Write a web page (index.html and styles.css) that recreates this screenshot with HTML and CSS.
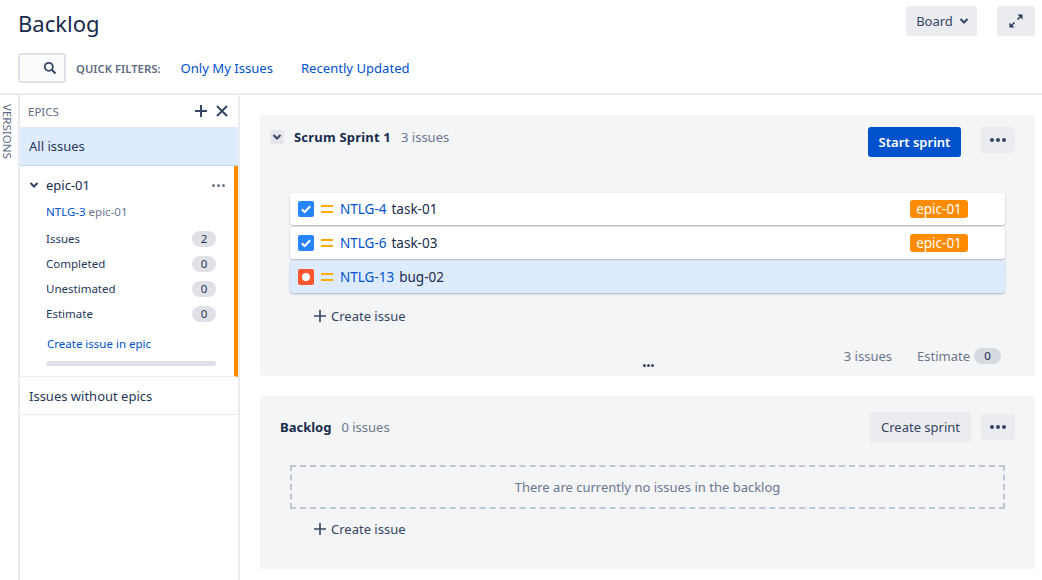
FILE: index.html
```html
<!DOCTYPE html>
<html lang="en">
<head>
	<meta charset="UTF-8">
	<meta name="viewport" content="width=device-width, initial-scale=1.0">
	<title>Backlog</title>
	<link rel="stylesheet" href="styles.css">
</head>
<body>
	<header class="header">
		<div class="title-row">
			<h1>Backlog</h1>
			<div class="title-actions">
				<button class="btn btn-board">Board
					<svg width="10" height="8" viewBox="0 0 10 8"><path d="M1.500 2l3.500 3.500L8.500 2" fill="none" stroke="#344563" stroke-width="2"/></svg>
				</button>
				<button class="btn btn-expand" aria-label="Expand">
					<svg width="16" height="16" viewBox="0 0 16 16"><path d="M9.500 1.500H14.500V6.500ZM1.500 14.500V9.500L6.500 14.500Z" fill="#253858"/><path d="M12 4L9.500 6.500M4 12l2.500-2.500" stroke="#253858" stroke-width="1.500"/></svg>
				</button>
			</div>
		</div>
		<div class="filter-row">
			<div class="search">
				<svg width="14" height="14" viewBox="0 0 14 14"><circle cx="5.800" cy="5.800" r="4" fill="none" stroke="#344563" stroke-width="1.800"/><path d="M8.800 8.800l3.700 3.700" stroke="#344563" stroke-width="2"/></svg>
			</div>
			<span class="filter-label">QUICK FILTERS:</span>
			<a class="filter-link">Only My Issues</a>
			<a class="filter-link">Recently Updated</a>
		</div>
	</header>

	<div class="content">
		<div class="versions"><span>VERSIONS</span></div>

		<aside class="epics">
			<div class="epics-head">
				<span>EPICS</span>
				<div class="epics-tools">
					<svg width="14" height="14" viewBox="0 0 14 14"><path d="M7 1v12M1 7h12" stroke="#344563" stroke-width="2"/></svg>
					<svg width="14" height="14" viewBox="0 0 14 14"><path d="M2 2l10 10M12 2L2 12" stroke="#344563" stroke-width="2"/></svg>
				</div>
			</div>
			<div class="all-issues">All issues</div>
			<div class="epic">
				<div class="epic-title">
					<svg width="10" height="8" viewBox="0 0 10 8"><path d="M1.500 2l3.500 3.500L8.500 2" fill="none" stroke="#344563" stroke-width="2"/></svg>
					<span>epic-01</span>
					<div class="epic-more"><i></i><i></i><i></i></div>
				</div>
				<div class="epic-key"><a>NTLG-3</a> epic-01</div>
				<div class="epic-stat"><span>Issues</span><b>2</b></div>
				<div class="epic-stat"><span>Completed</span><b>0</b></div>
				<div class="epic-stat"><span>Unestimated</span><b>0</b></div>
				<div class="epic-stat"><span>Estimate</span><b>0</b></div>
				<a class="epic-create">Create issue in epic</a>
				<div class="epic-progress"></div>
			</div>
			<div class="no-epic">Issues without epics</div>
		</aside>

		<main class="main">
			<section class="card sprint">
				<div class="card-head">
					<div class="toggle">
						<svg width="10" height="8" viewBox="0 0 10 8"><path d="M1.500 2l3.500 3.500L8.500 2" fill="none" stroke="#344563" stroke-width="2"/></svg>
					</div>
					<h2>Scrum Sprint 1</h2>
					<span class="count">3 issues</span>
					<button class="btn btn-primary">Start sprint</button>
					<button class="btn btn-more" aria-label="More"><i></i><i></i><i></i></button>
				</div>
				<div class="issues">
					<div class="issue">
						<svg class="type" width="16" height="16" viewBox="0 0 16 16"><rect width="16" height="16" rx="2" fill="#2684ff"/><path d="M3.800 8.200l2.900 2.800 5.500-5.800" fill="none" stroke="#fff" stroke-width="2"/></svg>
						<div class="priority"></div>
						<a>NTLG-4</a><span>task-01</span>
						<em>epic-01</em>
					</div>
					<div class="issue">
						<svg class="type" width="16" height="16" viewBox="0 0 16 16"><rect width="16" height="16" rx="2" fill="#2684ff"/><path d="M3.800 8.200l2.900 2.800 5.500-5.800" fill="none" stroke="#fff" stroke-width="2"/></svg>
						<div class="priority"></div>
						<a>NTLG-6</a><span>task-03</span>
						<em>epic-01</em>
					</div>
					<div class="issue selected">
						<svg class="type" width="16" height="16" viewBox="0 0 16 16"><rect width="16" height="16" rx="2" fill="#ff5630"/><circle cx="8" cy="8" r="4" fill="#fff"/></svg>
						<div class="priority"></div>
						<a>NTLG-13</a><span>bug-02</span>
					</div>
				</div>
				<div class="create">
					<svg width="14" height="14" viewBox="0 0 14 14"><path d="M7 1v12M1 7h12" stroke="#344563" stroke-width="1.600"/></svg>
					Create issue
				</div>
				<div class="sprint-foot">
					<div class="foot-dots"><i></i><i></i><i></i></div>
					<span class="foot-text">3 issues</span>
					<span class="foot-text foot-estimate">Estimate</span>
					<b class="foot-badge">0</b>
				</div>
			</section>

			<section class="card backlog">
				<div class="card-head">
					<h2>Backlog</h2>
					<span class="count">0 issues</span>
					<button class="btn btn-sprint">Create sprint</button>
					<button class="btn btn-more" aria-label="More"><i></i><i></i><i></i></button>
				</div>
				<div class="empty">There are currently no issues in the backlog</div>
				<div class="create">
					<svg width="14" height="14" viewBox="0 0 14 14"><path d="M7 1v12M1 7h12" stroke="#344563" stroke-width="1.600"/></svg>
					Create issue
				</div>
			</section>
		</main>
	</div>
</body>
</html>
```

FILE: styles.css
```css
* {
	box-sizing: border-box;
}

html, body {
	height: 100%;
}

body {
	font-family: "Noto Sans", "Open Sans", Arial, sans-serif;
	font-size: 13px;
	background-color: #fff;
	color: #172b4d;
	margin: 0;
	overflow: hidden;
	display: flex;
	flex-direction: column;
}

a {
	color: #0052cc;
}

.header {
	height: 95px;
	padding: 0 7px 0 18px;
	border-bottom: 2px solid #ebecf0;
	flex-shrink: 0;
}

.title-row {
	display: flex;
	justify-content: space-between;
	height: 53px;
	padding-top: 6px;
}

h1 {
	font-size: 22px;
	font-weight: 400;
	line-height: 34px;
	margin: 0;
}

.title-actions {
	display: flex;
	gap: 20px;
}

.btn {
	border: none;
	border-radius: 3px;
	font-family: inherit;
	font-size: 13px;
	color: #344563;
	background-color: #ebecf0;
	padding: 0;
	display: flex;
	align-items: center;
	justify-content: center;
}

.btn-board {
	width: 71px;
	height: 30px;
	gap: 6px;
	padding-left: 2px;
}

.btn-expand {
	width: 38px;
	height: 30px;
}

.filter-row {
	display: flex;
	align-items: center;
	height: 30px;
}

.search {
	width: 48px;
	height: 30px;
	border: 2px solid #dfe1e6;
	border-radius: 3px;
	background-color: #fafbfc;
	display: flex;
	align-items: center;
	justify-content: flex-end;
	padding-right: 7px;
}

.filter-label {
	font-size: 11.300px;
	font-weight: 600;
	color: #5e6c84;
	margin: 0 20px 0 10px;
}

.filter-link {
	margin-right: 28px;
	font-size: 13.100px;
}

.content {
	flex: 1;
	display: flex;
	min-height: 0;
}

.versions {
	width: 20px;
	border-right: 2px solid #ebecf0;
	padding-top: 9px;
	flex-shrink: 0;
}

.versions span {
	writing-mode: vertical-rl;
	font-size: 11.500px;
	line-height: 14px;
	color: #5e6c84;
	display: block;
}

.epics {
	width: 220px;
	border-right: 2px solid #ebecf0;
	flex-shrink: 0;
}

.epics-head {
	height: 32px;
	display: flex;
	align-items: center;
	justify-content: space-between;
	padding: 0 9px 0 8px;
	font-size: 11.500px;
	color: #5e6c84;
}

.epics-tools {
	display: flex;
	gap: 7px;
}

.all-issues {
	height: 39px;
	padding-left: 9px;
	line-height: 38px;
	background-color: #deebff;
	border-bottom: 1px solid #c1d7f5;
	color: #253858;
}

.epic {
	height: 211px;
	border-right: 4px solid #ff8b00;
	border-bottom: 1px solid #ebecf0;
	padding: 9px 4px 0 0;
}

.epic-title {
	display: flex;
	align-items: center;
	height: 20px;
	padding-left: 9px;
	gap: 7px;
}

.epic-more {
	margin-left: auto;
	margin-right: 5px;
	display: flex;
	gap: 2px;
}

.epic-more i,
.btn-more i,
.foot-dots i {
	width: 3px;
	height: 3px;
	border-radius: 50%;
	background-color: #6b778c;
}

.epic-key {
	font-size: 11.500px;
	color: #6b778c;
	margin: 9px 0 6px 26px;
	line-height: 16px;
}

.epic-stat {
	display: flex;
	justify-content: space-between;
	align-items: center;
	font-size: 11.500px;
	height: 25px;
	padding: 0 14px 0 26px;
	color: #253858;
}

.epic-stat b,
.foot-badge {
	width: 24px;
	height: 16px;
	border-radius: 8px;
	background-color: #dfe1e6;
	text-align: center;
	font-weight: 400;
	line-height: 16px;
	font-size: 11.500px;
}

.epic-create {
	display: block;
	font-size: 11.500px;
	margin: 10px 0 9px 27px;
	line-height: 16px;
}

.epic-progress {
	height: 5px;
	margin: 0 14px 0 26px;
	border-radius: 3px;
	background-color: #dfe1e6;
}

.no-epic {
	height: 38px;
	padding-left: 9px;
	line-height: 38px;
	border-bottom: 1px solid #ebecf0;
	color: #253858;
}

.main {
	flex: 1;
	padding: 20px 7px 0 20px;
}

.card {
	background-color: #f4f5f7;
	border-radius: 3px;
}

.sprint {
	height: 261px;
	margin-bottom: 20px;
	padding: 12px 20px 0 10px;
	position: relative;
}

.backlog {
	height: 173px;
	padding: 16px 20px 0 20px;
}

.card-head {
	display: flex;
	align-items: center;
	height: 30px;
}

.toggle {
	width: 14px;
	height: 14px;
	border-radius: 2px;
	background-color: #e4e6eb;
	display: flex;
	align-items: center;
	justify-content: center;
	margin-right: 10px;
	margin-top: -10px;
}

h2 {
	font-size: 13px;
	font-weight: 700;
	margin: 0 10px 0 0;
}

.sprint h2,
.sprint .count {
	margin-top: -10px;
}

.sprint h2 {
	letter-spacing: 0.2px;
}

.sprint .btn-more {
	align-self: flex-start;
}

.count {
	color: #6b778c;
	flex: 1;
}

.btn-primary {
	width: 93px;
	height: 30px;
	background-color: #0052cc;
	color: #fff;
	font-weight: 600;
	margin-right: 20px;
}

.btn-more {
	width: 34px;
	height: 26px;
	gap: 2px;
}

.btn-more i {
	width: 4px;
	height: 4px;
	background-color: #344563;
}

.btn-sprint {
	width: 101px;
	height: 30px;
	margin-right: 10px;
}

.issues {
	margin: 36px 10px 0 20px;
	display: flex;
	flex-direction: column;
	gap: 2px;
	font-size: 13.500px;
}

.issue {
	height: 32px;
	background-color: #fff;
	border-radius: 3px;
	box-shadow: 0 1px 2px rgba(9, 30, 66, 0.3);
	display: flex;
	align-items: center;
	padding-left: 8px;
}

.issue.selected {
	background-color: #deebff;
}

.type {
	flex-shrink: 0;
}

.priority {
	width: 12px;
	height: 8px;
	border-top: 2px solid #ffab00;
	border-bottom: 2px solid #ffab00;
	margin: 0 7px;
}

.issue span {
	margin-left: 5px;
}

.issue em {
	position: absolute;
	left: 650px;
	width: 58px;
	height: 18px;
	border-radius: 3px;
	background-color: #ff8b00;
	color: #fff;
	font-style: normal;
	text-align: center;
	line-height: 18px;
}

.create {
	display: flex;
	align-items: center;
	gap: 4px;
	margin: 13px 0 0 43px;
	height: 20px;
	color: #344563;
}

.sprint-foot {
	display: flex;
	align-items: center;
	justify-content: flex-end;
	height: 20px;
	margin: 20px 14px 0 0;
	color: #6b778c;
}

.foot-dots {
	position: absolute;
	left: 383px;
	bottom: 9px;
	display: flex;
	gap: 1px;
}

.foot-dots i {
	background-color: #344563;
}

.foot-estimate {
	margin: 0 4px 0 25px;
}

.foot-badge {
	width: 27px;
	background-color: #d5d9e0;
	color: #172b4d;
}

.empty {
	margin: 23px 10px 0 10px;
	height: 44px;
	border: 2px dashed #c1c7d0;
	color: #6b778c;
	text-align: center;
	line-height: 40px;
}

.backlog .create {
	margin: 10px 0 0 33px;
}
```
